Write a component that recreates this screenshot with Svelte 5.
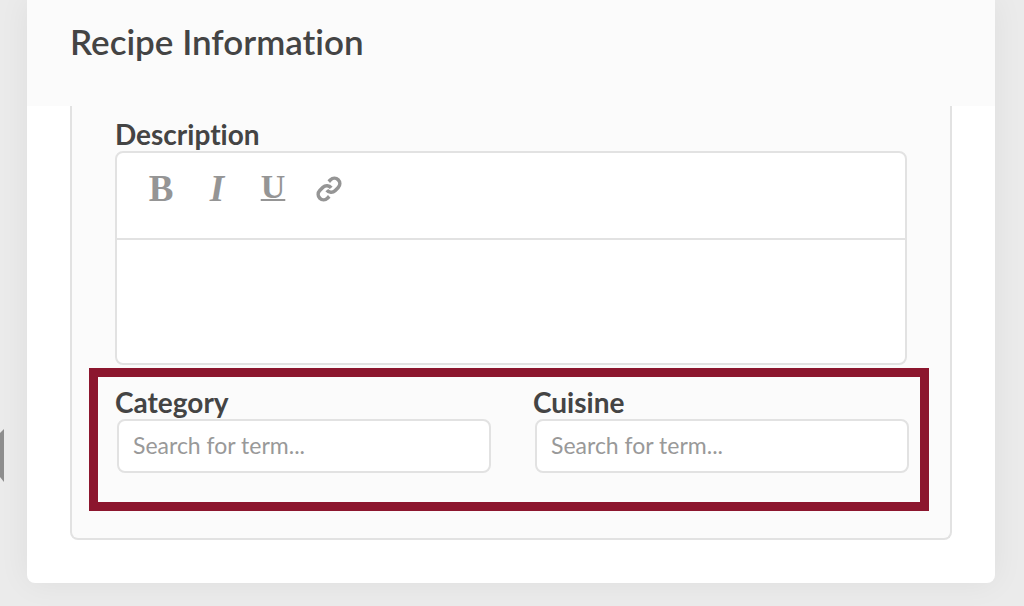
<script>
  let description = $state("");
  let terms = $state({ category: "", cuisine: "" });

  const taxonomies = [
    { id: "category", label: "Category" },
    { id: "cuisine", label: "Cuisine" },
  ];
</script>

<div class="page">
  <button class="prev" aria-label="Previous"></button>

  <main class="modal">
    <header>
      <h1>Recipe Information</h1>
    </header>

    <form class="panel">
      <label for="description">Description</label>
      <div class="editor">
        <div class="toolbar">
          <button type="button" class="bold" aria-label="Bold">B</button>
          <button type="button" class="italic" aria-label="Italic">I</button>
          <button type="button" class="underline" aria-label="Underline">U</button>
          <button type="button" aria-label="Link">
            <svg viewBox="0 0 24 24" width="26" height="26" fill="none" stroke="currentColor" stroke-width="3.3">
              <path d="M10 13a5 5 0 0 0 7.54.54l3-3a5 5 0 0 0-7.07-7.07l-1.72 1.71" />
              <path d="M14 11a5 5 0 0 0-7.54-.54l-3 3a5 5 0 0 0 7.07 7.07l1.71-1.71" />
            </svg>
          </button>
        </div>
        <textarea id="description" bind:value={description}></textarea>
      </div>

      <div class="terms">
        {#each taxonomies as tax}
          <div class="field">
            <label for={tax.id}>{tax.label}</label>
            <input id={tax.id} type="text" placeholder="Search for term..." bind:value={terms[tax.id]} />
          </div>
        {/each}
      </div>
    </form>
  </main>
</div>

<style>
  :global(body) {
    background: #ebebeb;
  }

  .page {
    position: relative;
    min-height: 100vh;
    box-sizing: border-box;
    padding: 0 29px 23px 27px;
    overflow: hidden;
    font-family: Lato, "Liberation Sans", sans-serif;
    font-variant-ligatures: none;
    color: #444;
  }

  /* arrow of the carousel behind the modal */
  .prev {
    position: absolute;
    left: 0;
    top: 429px;
    width: 4px;
    height: 53px;
    padding: 0;
    border: 0;
    background: #8e8e8e;
    clip-path: polygon(0 4px, 100% 0, 100% 100%, 0 48px);
  }

  .modal {
    padding-bottom: 43px;
    background: #fff;
    border-radius: 0 0 8px 8px;
    box-shadow: 0 0 32px rgba(0, 0, 0, 0.06);
  }

  header {
    height: 106px;
    padding: 0 43px;
    background: #fbfbfb;
  }

  h1 {
    margin: 0;
    padding-top: 19px;
    font-size: 35px;
    font-weight: 600;
    line-height: 44px;
  }

  .panel {
    margin: 0 43px;
    padding: 12px 43px 26px;
    background: #fbfbfb;
    border: 2px solid #e2e2e2;
    border-top: 0;
    border-radius: 0 0 8px 8px;
  }

  label {
    display: block;
    font-size: 28px;
    font-weight: 700;
    line-height: 33px;
  }

  .editor {
    background: #fff;
    border: 2px solid #e2e2e2;
    border-radius: 8px;
  }

  .toolbar {
    display: flex;
    gap: 16px;
    height: 87px;
    box-sizing: border-box;
    padding: 16px 24px;
    border-bottom: 2px solid #e2e2e2;
  }

  .toolbar button {
    width: 40px;
    height: 40px;
    padding: 0;
    border: 0;
    background: none;
    color: #959595;
    font-family: "Liberation Serif", serif;
    font-size: 37px;
    line-height: 40px;
  }

  .toolbar svg {
    display: block;
    margin: auto;
  }

  .toolbar .bold {
    font-weight: 700;
  }

  .toolbar .italic {
    font-style: italic;
    font-weight: 700;
  }

  .toolbar .underline {
    font-size: 34px;
    font-weight: 700;
    line-height: 36px;
    padding-bottom: 4px;
    text-decoration: underline;
    text-decoration-thickness: 2px;
  }

  textarea {
    display: block;
    width: 100%;
    height: 123px;
    box-sizing: border-box;
    padding: 16px;
    border: 0;
    outline: 0;
    resize: none;
    background: none;
    font: inherit;
    font-size: 24px;
  }

  .terms {
    position: relative;
    display: grid;
    grid-template-columns: 1fr 1fr;
    gap: 44px;
    padding: 21px 0 39px;
  }

  /* highlight around the two term fields */
  .terms::after {
    content: "";
    position: absolute;
    inset: 3px -22px 1px -26px;
    border: 9px solid #8c162e;
    pointer-events: none;
  }

  .field input {
    display: block;
    width: 100%;
    height: 54px;
    box-sizing: border-box;
    margin-left: 2px;
    padding: 0 14px 2px;
    border: 2px solid #e2e2e2;
    border-radius: 8px;
    background: #fff;
    color: #444;
    font: inherit;
    font-size: 23px;
  }

  .field input::placeholder {
    color: #999;
    opacity: 1;
  }
</style>
